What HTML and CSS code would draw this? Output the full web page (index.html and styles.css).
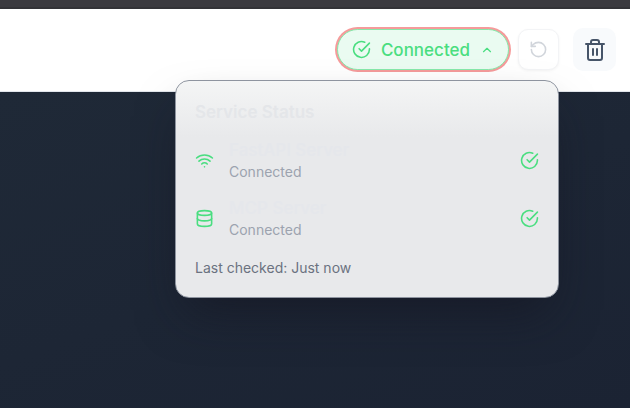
FILE: index.html
```html
<!DOCTYPE html>
<html lang="en">
<head>
<meta charset="utf-8">
<meta name="viewport" content="width=device-width, initial-scale=1">
<title>Service Status</title>
<link rel="stylesheet" href="styles.css">
</head>
<body>
<div class="strip"></div>
<header class="header">
  <div class="status">
    <button class="pill" type="button" aria-expanded="true" aria-controls="status-panel">
      <svg class="icon" viewBox="0 0 24 24" aria-hidden="true"><path d="M22 11.08V12a10 10 0 1 1-5.93-9.14"/><path d="m9 11 3 3L22 4"/></svg>
      <span>Connected</span>
      <svg class="icon chevron" viewBox="0 0 24 24" aria-hidden="true"><path d="m18 15-6-6-6 6"/></svg>
    </button>
    <button class="refresh" type="button" aria-label="Refresh" disabled>
      <svg class="icon" viewBox="0 0 24 24" aria-hidden="true"><path d="M3 12a9 9 0 1 0 9-9 9.75 9.75 0 0 0-6.74 2.74L3 8"/><path d="M3 3v5h5"/></svg>
    </button>
    <section class="panel" id="status-panel">
      <h2 class="title">Service Status</h2>
      <ul class="services">
        <li class="service">
          <svg class="icon" viewBox="0 0 24 24" aria-hidden="true"><path d="M12 20h.01"/><path d="M2 8.82a15 15 0 0 1 20 0"/><path d="M5 12.86a10 10 0 0 1 14 0"/><path d="M8.5 16.43a5 5 0 0 1 7 0"/></svg>
          <div class="info">
            <span class="name">FastAPI Server</span>
            <span class="state">Connected</span>
          </div>
          <svg class="icon" viewBox="0 0 24 24" aria-hidden="true"><path d="M22 11.08V12a10 10 0 1 1-5.93-9.14"/><path d="m9 11 3 3L22 4"/></svg>
        </li>
        <li class="service">
          <svg class="icon" viewBox="0 0 24 24" aria-hidden="true"><ellipse cx="12" cy="5" rx="9" ry="3"/><path d="M3 5v14a9 3 0 0 0 18 0V5"/><path d="M3 12a9 3 0 0 0 18 0"/></svg>
          <div class="info">
            <span class="name">MCP Server</span>
            <span class="state">Connected</span>
          </div>
          <svg class="icon" viewBox="0 0 24 24" aria-hidden="true"><path d="M22 11.08V12a10 10 0 1 1-5.93-9.14"/><path d="m9 11 3 3L22 4"/></svg>
        </li>
      </ul>
      <p class="checked">Last checked: Just now</p>
    </section>
  </div>
  <button class="trash" type="button" aria-label="Delete">
    <svg class="icon" viewBox="0 0 24 24" aria-hidden="true"><path d="M3 6h18"/><path d="M19 6v14a2 2 0 0 1-2 2H7a2 2 0 0 1-2-2V6"/><path d="M8 6V4a2 2 0 0 1 2-2h4a2 2 0 0 1 2 2v2"/><path d="M10 11v6M14 11v6"/></svg>
  </button>
</header>
<main class="content"></main>
</body>
</html>
```

FILE: styles.css
```css
* {
  box-sizing: border-box;
}

body {
  margin: 0;
  min-height: 100vh;
  display: flex;
  flex-direction: column;
  font-family: Inter, "Liberation Sans", sans-serif;
}

button {
  display: flex;
  align-items: center;
  justify-content: center;
  padding: 0;
  font: inherit;
}

.icon {
  flex: none;
  width: 19px;
  height: 19px;
  fill: none;
  stroke: currentColor;
  stroke-width: 2;
  stroke-linecap: round;
  stroke-linejoin: round;
}

.strip {
  height: 9px;
  background: #3b3a3f;
  border-bottom: 2px solid #333337;
}

.header {
  display: flex;
  align-items: center;
  justify-content: flex-end;
  gap: 14px;
  padding: 19px 14px 20px;
  background: #fff;
  border-bottom: 1px solid #e2e6ec;
}

.status {
  position: relative;
  display: flex;
  align-items: center;
  gap: 9px;
}

.pill {
  height: 41px;
  gap: 10px;
  padding: 0 14px;
  border: 1px solid #86e8aa;
  border-radius: 21px;
  background: #eafbf1;
  box-shadow: 0 0 0 2px #f59b9b;
  color: #4ade80;
  font-size: 17px;
  font-weight: 500;
}

.chevron {
  width: 14px;
  height: 14px;
}

.refresh {
  width: 41px;
  height: 41px;
  border: 1px solid #f3f4f6;
  border-radius: 10px;
  background: #fff;
  box-shadow: 0 1px 3px #0000000d;
  color: #d1d5db;
}

.trash {
  width: 43px;
  height: 43px;
  border: 0;
  border-radius: 10px;
  background: #f8fafc;
  color: #475569;
}

.trash .icon {
  width: 24px;
  height: 24px;
}

.panel {
  position: absolute;
  z-index: 1;
  top: calc(100% + 10px);
  right: 0;
  width: 384px;
  padding: 19px;
  border: 1px solid #8e949f;
  border-radius: 14px;
  background: linear-gradient(#f4f5f5, #e8e9eb 56px);
  box-shadow: 0 24px 48px -12px #14141f99;
}

.title {
  margin: 0 0 14px;
  color: #e4e6e9;
  font-size: 17px;
  font-weight: 600;
  line-height: 24px;
}

.services {
  display: grid;
  gap: 14px;
  margin: 0;
  padding: 0;
  list-style: none;
}

.service {
  display: flex;
  align-items: center;
  gap: 15px;
  color: #4ade80;
}

.info {
  display: flex;
  flex: 1;
  flex-direction: column;
}

.name {
  color: #e5e7eb;
  font-size: 17px;
  font-weight: 500;
  line-height: 24px;
}

.state {
  color: #9ca3af;
  font-size: 14px;
  line-height: 20px;
}

.checked {
  margin: 18px 0 0;
  color: #6b7280;
  font-size: 14px;
  line-height: 20px;
}

.content {
  flex: 1;
  background: linear-gradient(160deg, #1f2937, #1b2333);
}
```
